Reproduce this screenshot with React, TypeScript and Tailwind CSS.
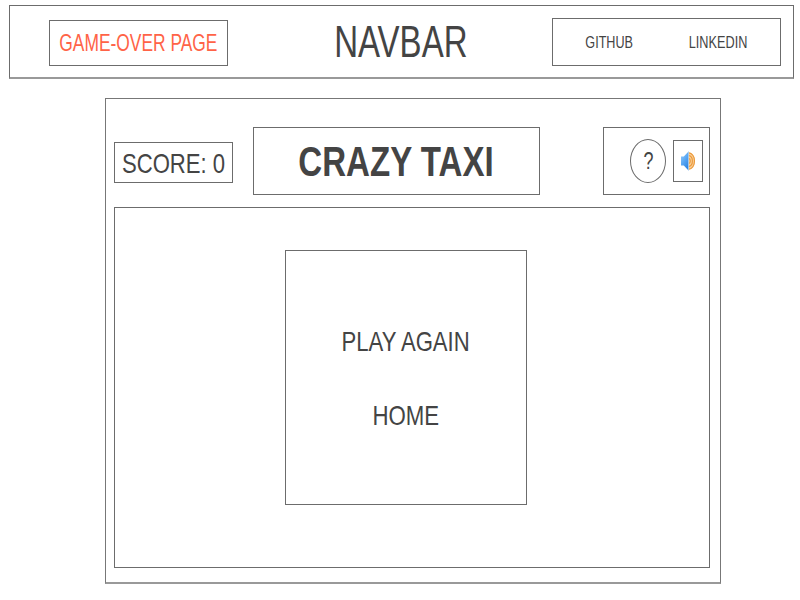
import type { ReactNode } from "react";

// Horizontally condensed label, centred on its slot.
function Label({ className, children }: { className: string; children: ReactNode }) {
  return (
    <span className={"block shrink-0 whitespace-nowrap leading-none " + className}>{children}</span>
  );
}

function Speaker() {
  return (
    <svg width="16" height="20" viewBox="0 0 16 20" fill="none">
      <defs>
        <linearGradient id="cone" x1="0" y1="0" x2="0.6" y2="1">
          <stop offset="0" stopColor="#9fd0fb" />
          <stop offset="0.5" stopColor="#5eabf5" />
          <stop offset="1" stopColor="#2f86e4" />
        </linearGradient>
      </defs>
      <path d="M8.5 1.200C12.500 1.500 15 5 15 10s-2.500 8.500-6.500 8.800Z" fill="#f9cf98" />
      <path
        d="M8.500 1.700C12 2 14.500 5.500 14.500 10s-2.500 8-6 8.300M8.500 4.500c2.300.2 3.900 2.600 3.900 5.500s-1.600 5.300-3.900 5.500M8.500 7.200c1.100.2 1.800 1.300 1.800 2.800s-.7 2.600-1.800 2.800"
        stroke="#eb9838"
        strokeWidth="1.100"
      />
      <path d="M1 5.500h2.800L8.500.5v19L3.800 14.600H1Z" fill="url(#cone)" />
      <path d="M8.500.5v19" stroke="#a9cdec" strokeWidth=".8" />
    </svg>
  );
}

export default function App() {
  return (
    <div className="h-[600px] w-[800px] overflow-hidden bg-white pt-[5px] font-['Liberation_Sans',Arial,sans-serif] text-[#444]">
      <nav className="ml-[9px] flex h-[74px] w-[785px] border border-b-2 border-[#6c6c6c] border-b-[#999]">
        <div className="ml-[39px] mt-[14px] flex h-[46px] w-[179px] items-center justify-center border border-[#6c6c6c] pt-[1px] text-[#ff6347]">
          <Label className="scale-x-[0.743] text-[23.400px]">GAME-OVER PAGE</Label>
        </div>
        <div className="flex w-[324px] items-center justify-center pl-[22px] pt-[2px]">
          <Label className="scale-x-[0.759] text-[43.500px]">NAVBAR</Label>
        </div>
        <div className="mt-[12px] flex h-[48px] w-[229px] items-center border border-[#6c6c6c]">
          <div className="ml-[16px] flex w-[80px] justify-center">
            <Label className="scale-x-[0.765] text-[16.500px]">GITHUB</Label>
          </div>
          <div className="ml-[29px] flex w-[80px] justify-center">
            <Label className="scale-x-[0.770] text-[16.500px]">LINKEDIN</Label>
          </div>
        </div>
      </nav>

      <main className="ml-[105px] mt-[19px] h-[486px] w-[616px] border border-b-2 border-[#777] border-b-[#999]">
        <header className="flex h-[108px] pl-[8px] pt-[28px]">
          <div className="mt-[15px] flex h-[41px] w-[119px] items-center justify-center border border-[#6c6c6c] pt-[1px]">
            <Label className="scale-x-[0.775] text-[28.500px]">SCORE: 0</Label>
          </div>
          <div className="ml-[20px] flex h-[68px] w-[287px] items-center justify-center border border-[#6c6c6c] pt-[1px]">
            <Label className="scale-x-[0.769] text-[43px] font-bold">CRAZY TAXI</Label>
          </div>
          <div className="ml-[63px] flex h-[68px] w-[107px] items-center border border-[#6c6c6c]">
            <button className="ml-[26px] flex h-[44px] w-[36px] items-center justify-center rounded-[50%] border border-[#6c6c6c]">
              <Label className="scale-x-[0.780] text-[23px]">?</Label>
            </button>
            <button className="ml-[7px] flex h-[42px] w-[30px] items-center justify-center border border-[#6c6c6c]">
              <Speaker />
            </button>
          </div>
        </header>

        <section className="ml-[8px] h-[361px] w-[596px] border border-[#6c6c6c] pl-[170px] pt-[42px]">
          <div className="flex h-[255px] w-[242px] flex-col items-center border border-[#6c6c6c] pt-[76px]">
            <Label className="scale-x-[0.775] text-[28.500px]">PLAY AGAIN</Label>
            <Label className="mt-[45.500px] scale-x-[0.780] text-[28.500px]">HOME</Label>
          </div>
        </section>
      </main>
    </div>
  );
}
